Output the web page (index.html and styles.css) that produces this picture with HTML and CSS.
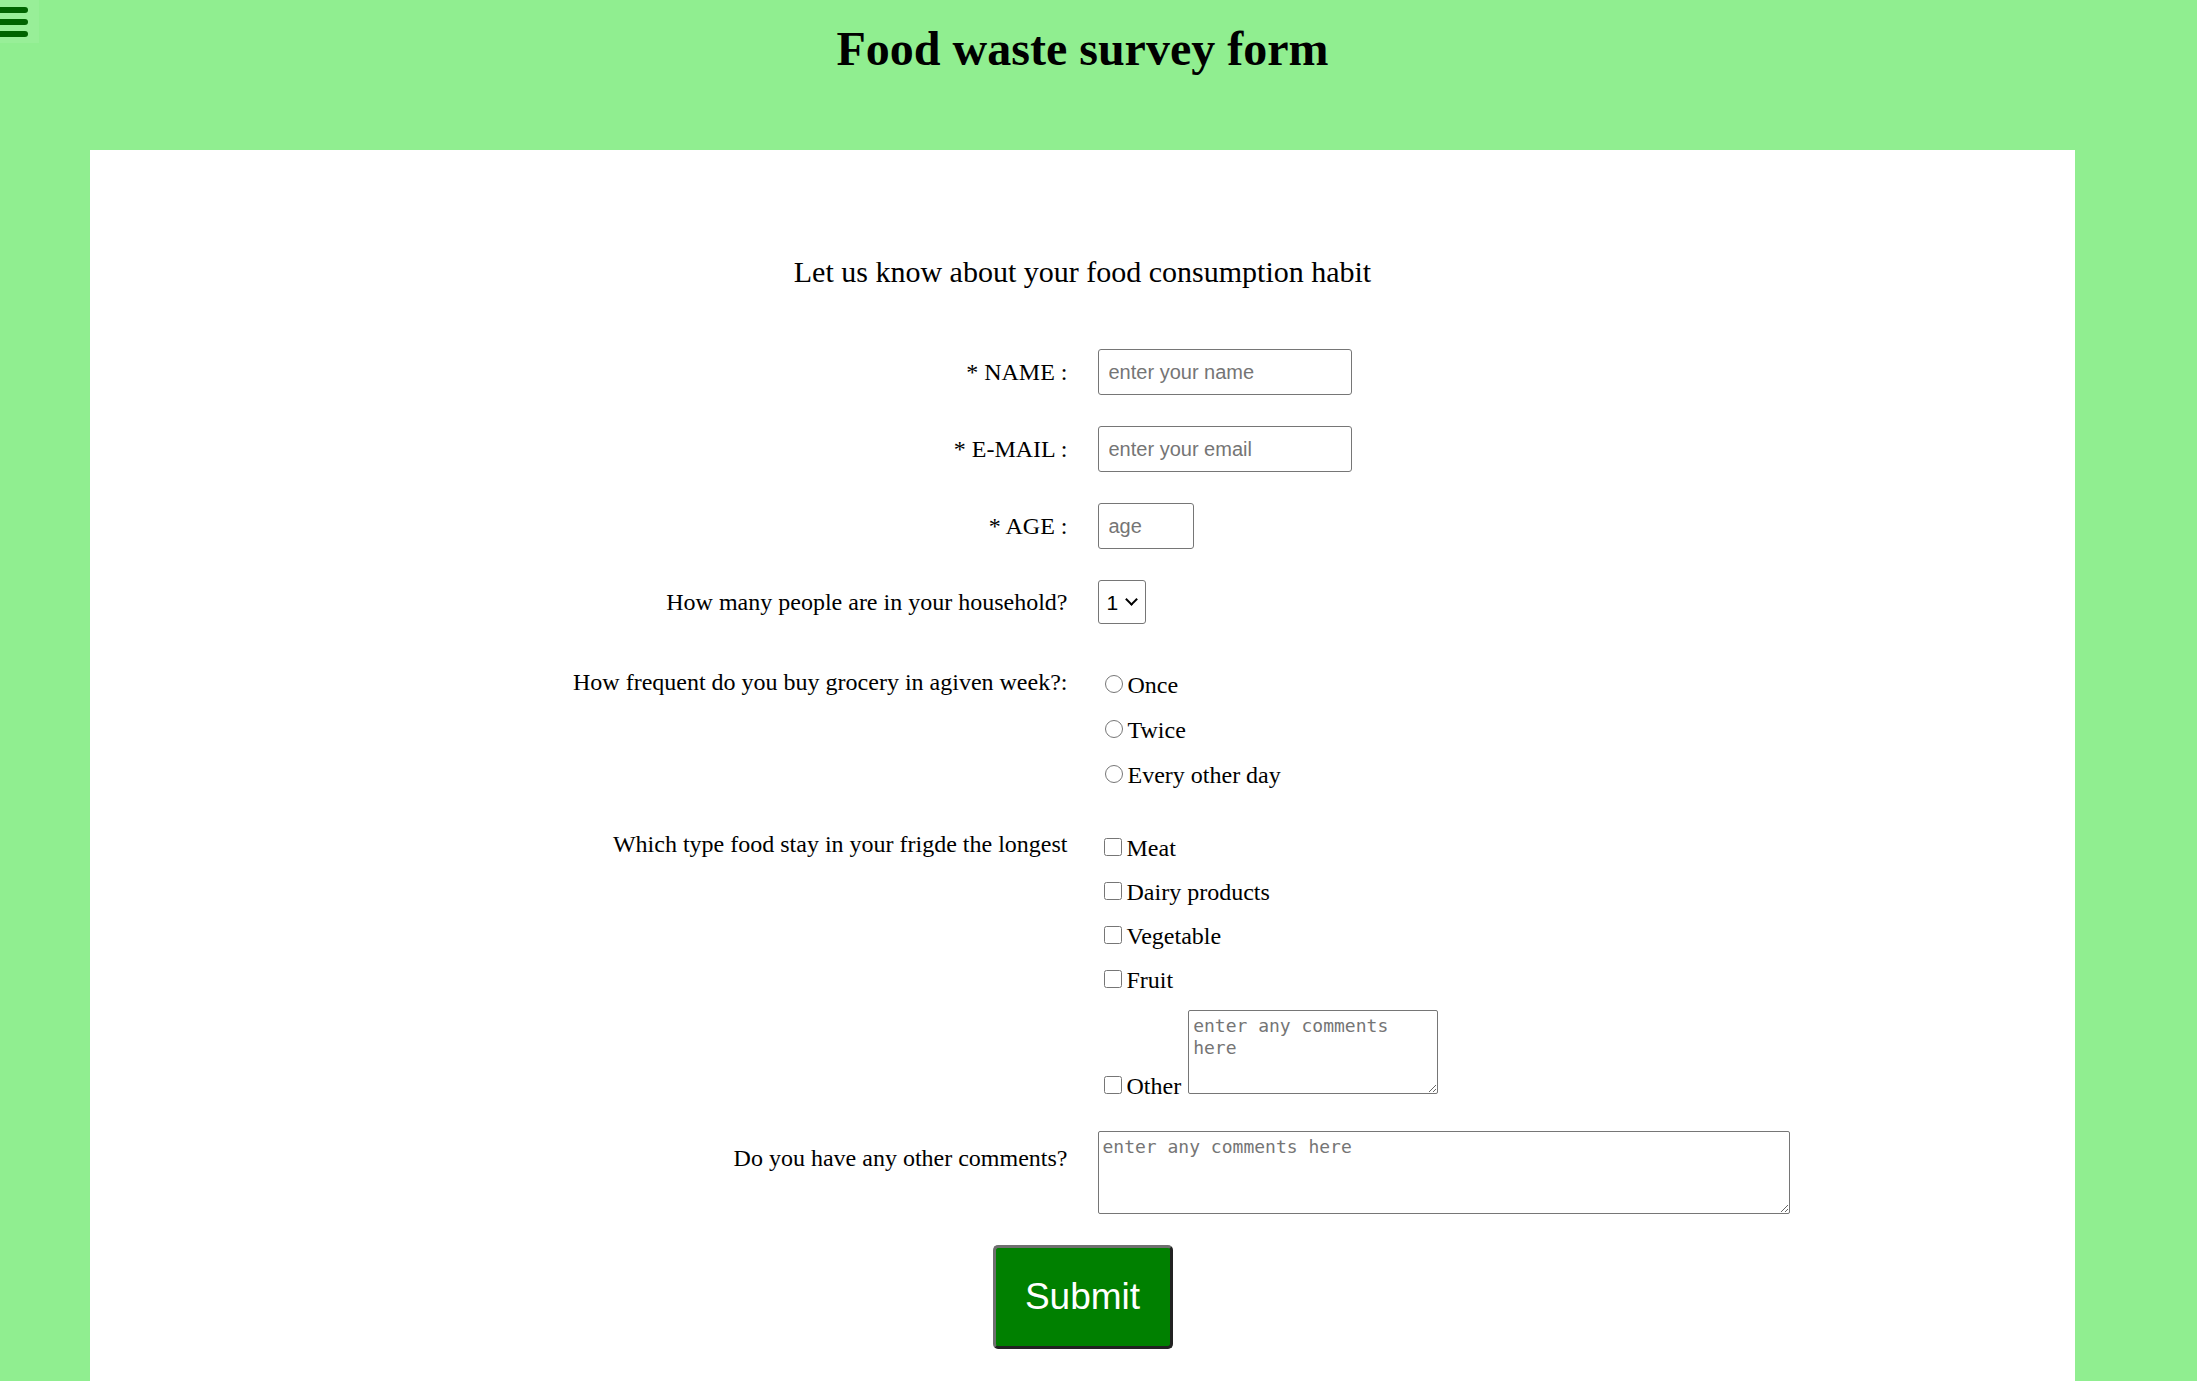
FILE: index.html
```html
<!DOCTYPE html>
<html lang="en">
<head>
<meta charset="utf-8">
<title>Food waste survey form</title>
<link rel="stylesheet" href="styles.css">
</head>
<body>
<div class="menu-toggle" aria-label="menu">
  <span class="bar"></span>
  <span class="bar"></span>
  <span class="bar"></span>
</div>
<div class="page">
  <header class="header">
    <h1 class="title">Food waste survey form</h1>
  </header>
  <main class="card">
    <p class="subtitle">Let us know about your food consumption habit</p>
    <form class="form">
      <div class="row row-first row-center">
        <label class="label" for="name">* NAME :</label>
        <div class="control"><input class="text-input" id="name" type="text" placeholder="enter your name"></div>
      </div>
      <div class="row row-center">
        <label class="label" for="email">* E-MAIL :</label>
        <div class="control"><input class="text-input" id="email" type="email" placeholder="enter your email"></div>
      </div>
      <div class="row row-center">
        <label class="label" for="age">* AGE :</label>
        <div class="control"><input class="text-input age-input" id="age" type="number" placeholder="age"></div>
      </div>
      <div class="row row-center">
        <label class="label" for="people">How many people are in your household?</label>
        <div class="control">
          <div class="select-wrap">
            <select class="select" id="people">
              <option>1</option>
              <option>2</option>
              <option>3</option>
              <option>4</option>
              <option>5+</option>
            </select>
          </div>
        </div>
      </div>
      <div class="row">
        <div class="label label-top">How frequent do you buy grocery in agiven week?:</div>
        <div class="control options options-radio">
          <label class="option"><input class="radio" type="radio" name="freq">Once</label>
          <label class="option"><input class="radio" type="radio" name="freq">Twice</label>
          <label class="option"><input class="radio" type="radio" name="freq">Every other day</label>
        </div>
      </div>
      <div class="row">
        <div class="label label-check">Which type food stay in your frigde the longest</div>
        <div class="control options options-check">
          <label class="option"><input class="check" type="checkbox">Meat</label>
          <label class="option"><input class="check" type="checkbox">Dairy products</label>
          <label class="option"><input class="check" type="checkbox">Vegetable</label>
          <label class="option"><input class="check" type="checkbox">Fruit</label>
          <label class="option option-other"><input class="check" type="checkbox">Other<textarea class="small-area" placeholder="enter any comments here"></textarea></label>
        </div>
      </div>
      <div class="row row-comments">
        <label class="label label-top" for="comments">Do you have any other comments?</label>
        <div class="control"><textarea class="big-area" id="comments" placeholder="enter any comments here"></textarea></div>
      </div>
      <div class="submit-wrap">
        <button class="submit" type="submit">Submit</button>
      </div>
    </form>
  </main>
</div>
</body>
</html>
```
FILE: styles.css
```css
html, body {
  margin: 0;
  padding: 0;
}

body {
  background: #90ee90;
  font-family: "Liberation Serif", "Times New Roman", serif;
  color: #000;
}

.menu-toggle {
  position: absolute;
  top: 0;
  left: 0;
  width: 39px;
  height: 43px;
  background: rgba(255, 255, 255, 0.08);
  overflow: hidden;
  display: flex;
  flex-direction: column;
  padding-top: 7px;
  gap: 6px;
  box-sizing: border-box;
}

.menu-toggle .bar {
  display: block;
  width: 35px;
  height: 6px;
  margin-left: -7px;
  background: #006400;
  border-radius: 3px;
}

.page {
  padding: 0 122px 0 90px;
}

.header {
  height: 150px;
  padding-top: 21px;
  box-sizing: border-box;
}

.title {
  margin: 0;
  font-size: 48px;
  line-height: 56px;
  font-weight: bold;
  text-align: center;
}

.card {
  display: block;
  background: #fff;
  padding: 104px 0 80px;
}

.subtitle {
  margin: 0;
  font-size: 30px;
  line-height: 36px;
  text-align: center;
}

.form {
  display: flex;
  flex-direction: column;
}

.row {
  display: grid;
  grid-template-columns: 1fr 1fr;
  column-gap: 30px;
  align-items: start;
  margin-top: 31px;
}

.row-first {
  margin-top: 59px;
}

.row-center {
  align-items: center;
}

.label {
  font-size: 24px;
  line-height: 28px;
  text-align: right;
}

.label-top {
  margin-top: 13px;
}

.label-check {
  margin-top: 10px;
}

.control {
  display: flex;
  flex-direction: column;
  align-items: flex-start;
}

.text-input {
  box-sizing: border-box;
  width: 254px;
  height: 46px;
  padding: 10px;
  border: 1px solid #767676;
  border-radius: 3px;
  font-family: "Liberation Sans", Arial, sans-serif;
  font-size: 20px;
  line-height: 24px;
  color: #000;
  background: #fff;
}

.age-input {
  width: 96px;
  -moz-appearance: textfield;
}

.age-input::-webkit-outer-spin-button,
.age-input::-webkit-inner-spin-button {
  -webkit-appearance: none;
  margin: 0;
}

.text-input::placeholder,
.small-area::placeholder,
.big-area::placeholder {
  color: #757575;
  opacity: 1;
}

.select-wrap {
  position: relative;
  width: 48px;
  height: 44px;
}

.select-wrap::after {
  content: "";
  position: absolute;
  top: 15px;
  left: 29px;
  width: 7px;
  height: 7px;
  border-right: 2px solid #000;
  border-bottom: 2px solid #000;
  transform: rotate(45deg);
  pointer-events: none;
}

.select {
  box-sizing: border-box;
  width: 48px;
  height: 44px;
  padding: 0 0 0 8px;
  border: 1px solid #767676;
  border-radius: 3px;
  font-family: "Liberation Sans", Arial, sans-serif;
  font-size: 21px;
  color: #000;
  background: #fff;
  -webkit-appearance: none;
  appearance: none;
}

.options {
  display: flex;
  flex-direction: column;
}

.options-radio {
  padding-top: 16px;
  gap: 17px;
}

.options-check {
  padding-top: 14px;
  gap: 16px;
}

.option {
  display: block;
  font-size: 24px;
  line-height: 28px;
  white-space: nowrap;
}

.radio {
  width: 18px;
  height: 18px;
  margin: 0 5px 0 7px;
  vertical-align: baseline;
}

.check {
  width: 18px;
  height: 18px;
  margin: 0 5px 0 6px;
  vertical-align: baseline;
}

.small-area,
.big-area {
  box-sizing: border-box;
  padding: 4px;
  border: 1px solid #767676;
  border-radius: 2px;
  font-family: "DejaVu Sans Mono", "Liberation Mono", monospace;
  font-size: 18px;
  line-height: 22px;
  color: #000;
  background: #fff;
  resize: both;
}

.small-area {
  width: 250px;
  height: 84px;
  margin: 0 0 0 7px;
  vertical-align: baseline;
}

.big-area {
  width: 692px;
  height: 83px;
  margin: 0;
}

.submit-wrap {
  display: flex;
  justify-content: center;
  margin-top: 31px;
}

.submit {
  box-sizing: border-box;
  width: 180px;
  height: 104px;
  padding: 0;
  background: #008000;
  color: #fff;
  font-family: "Liberation Sans", Arial, sans-serif;
  font-size: 37px;
  border-style: solid;
  border-width: 3px;
  border-color: #6f6f6f #222 #222 #6f6f6f;
  border-radius: 5px;
  cursor: pointer;
}
```
